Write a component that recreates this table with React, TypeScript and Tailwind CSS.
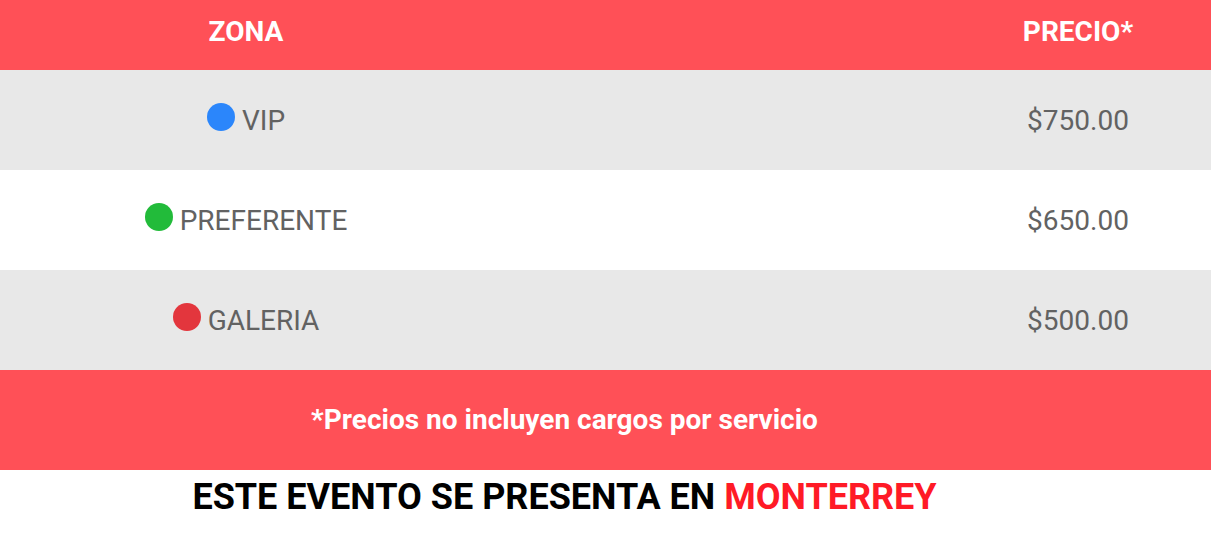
const zonas = [
  { nombre: 'VIP', precio: '$750.00', color: 'bg-[#2b86fb]', fondo: 'bg-[#e8e8e8]' },
  { nombre: 'PREFERENTE', precio: '$650.00', color: 'bg-[#22bb3a]', fondo: 'bg-white' },
  { nombre: 'GALERIA', precio: '$500.00', color: 'bg-[#e3363d]', fondo: 'bg-[#e8e8e8]' },
];

export default function App() {
  return (
    <div className="w-[1211px] h-[537px] bg-white font-['Roboto',sans-serif]">
      {/* Encabezado */}
      <div className="flex h-[70px] items-center bg-[#ff5057] text-white font-bold text-[28px] pb-[6px]">
        <div className="w-[492px] text-center">ZONA</div>
        <div className="flex-1" />
        <div className="w-[266px] text-center">PRECIO*</div>
      </div>

      {zonas.map((z) => (
        <div key={z.nombre} className={`flex h-[100px] items-center text-[#626262] text-[28px] pt-[2px] ${z.fondo}`}>
          <div className="w-[492px] flex justify-center items-center gap-[7px]">
            <span className={`w-[28px] h-[28px] rounded-full ${z.color} -mt-[9px]`} />
            <span>{z.nombre}</span>
          </div>
          <div className="flex-1" />
          <div className="w-[266px] text-center">{z.precio}</div>
        </div>
      ))}

      <div className="h-[100px] bg-[#ff5057]">
        <div className="w-[1129px] h-full flex items-center justify-center text-white font-bold text-[28px]">
          *Precios no incluyen cargos por servicio
        </div>
      </div>

      <div className="w-[1129px] h-[67px] flex items-center justify-center font-bold text-[36px] text-black pb-[13px]">
        ESTE EVENTO SE PRESENTA EN&nbsp;<span className="text-[#ff1a26]">MONTERREY</span>
      </div>
    </div>
  );
}
